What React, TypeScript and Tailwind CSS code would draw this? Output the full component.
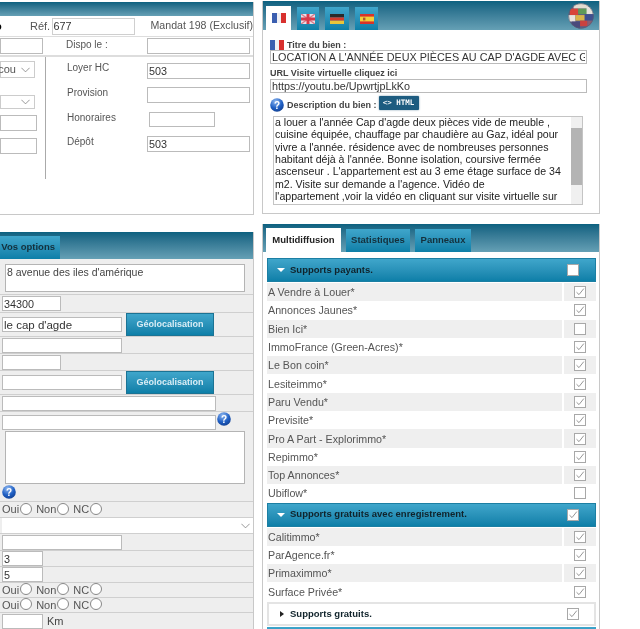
import type { ReactNode } from "react";

const headerBar = "bg-gradient-to-b from-[#0b6180] to-[#65a0b5]";
const blueGrad = "bg-gradient-to-b from-[#3fa6cb] to-[#0c7fa8]";

const Field = ({ value = "", className = "" }: { value?: string; className?: string }) => (
  <input
    readOnly
    value={value}
    className={`block border border-[#bbbbbb] bg-white px-[1px] text-[10.8px] leading-none text-[#333] outline-none ${className}`}
  />
);

const Help = ({ className = "" }: { className?: string }) => (
  <svg viewBox="0 0 14 14" className={`h-[14px] w-[14px] shrink-0 ${className}`}>
    <defs>
      <radialGradient id="helpGrad" cx="40%" cy="25%" r="80%">
        <stop offset="0%" stopColor="#8fb8f0" />
        <stop offset="60%" stopColor="#1f5fc4" />
        <stop offset="100%" stopColor="#123f90" />
      </radialGradient>
    </defs>
    <circle cx="7" cy="7" r="6.8" fill="url(#helpGrad)" />
    <text x="7" y="11" textAnchor="middle" fontSize="10" fontWeight="700" fill="#fff" fontFamily="Liberation Sans, sans-serif">
      ?
    </text>
  </svg>
);

const Check = ({ checked, className = "" }: { checked: boolean; className?: string }) => (
  <span className={`flex h-[12px] w-[12px] items-center justify-center border border-[#a8a8a8] bg-white ${className}`}>
    {checked && (
      <svg viewBox="0 0 10 10" className="h-[10px] w-[10px]">
        <path d="M1.5 5.2 L4 7.6 L8.8 1.6" fill="none" stroke="#8a8a8a" strokeWidth="0.9" />
      </svg>
    )}
  </span>
);

const Chevron = () => (
  <svg viewBox="0 0 12 7" className="h-[6px] w-[9px] shrink-0">
    <path d="M0.5 0.5 L6 6 L11.5 0.5" fill="none" stroke="#777" strokeWidth="1" />
  </svg>
);

const Radios = () => (
  <div className="flex items-center text-[11px] leading-none text-[#555]">
    {["Oui", "Non", "NC"].map((label) => (
      <span key={label} className="mr-[4px] flex items-center">
        {label}
        <span className="-mt-[2px] ml-[1px] h-[12px] w-[12px] rounded-full border border-[#888] bg-white" />
      </span>
    ))}
  </div>
);

const LangFlag = ({ lang }: { lang: "fr" | "uk" | "de" | "es" }) => (
  <svg viewBox="0 0 14 10" className="h-[10px] w-[14px]">
    {lang === "fr" && (
      <>
        <rect width="5" height="10" fill="#3b5fb0" />
        <rect x="5" width="4" height="10" fill="#f0f0f4" />
        <rect x="9" width="5" height="10" fill="#d8302e" />
      </>
    )}
    {lang === "uk" && (
      <>
        <rect width="14" height="10" fill="#e9dfe6" />
        <path d="M0 0 L14 10 M14 0 L0 10" stroke="#d97a8a" strokeWidth="1.4" />
        <rect x="5.5" width="3" height="10" fill="#d63a4a" />
        <rect y="3.5" width="14" height="3" fill="#d63a4a" />
      </>
    )}
    {lang === "de" && (
      <>
        <rect width="14" height="3.4" fill="#2a2a2a" />
        <rect y="3.4" width="14" height="3.3" fill="#d23a2c" />
        <rect y="6.7" width="14" height="3.3" fill="#e8c53a" />
      </>
    )}
    {lang === "es" && (
      <>
        <rect width="14" height="10" fill="#d8332a" />
        <rect y="2.6" width="14" height="4.8" fill="#f2cf3a" />
        <rect x="3" y="3.6" width="2.4" height="2.8" fill="#b5562c" />
      </>
    )}
  </svg>
);

const Globe = () => (
  <svg viewBox="0 0 28 28" className="h-[26px] w-[26px]">
    <defs>
      <clipPath id="globeClip">
        <circle cx="14" cy="14" r="13.5" />
      </clipPath>
    </defs>
    <g clipPath="url(#globeClip)">
      <rect width="28" height="28" fill="#5b5f86" />
      <rect x="6" y="0" width="16" height="6" fill="#e4dcd0" />
      <rect x="2" y="6" width="9" height="7" fill="#d8453a" />
      <rect x="11" y="6" width="12" height="6" fill="#5f9a58" />
      <rect x="20" y="4" width="8" height="8" fill="#e6e2da" />
      <rect x="0" y="13" width="8" height="7" fill="#e9e4de" />
      <rect x="8" y="13" width="10" height="6" fill="#d9b54a" />
      <rect x="18" y="12" width="10" height="7" fill="#3f4f8f" />
      <rect x="4" y="20" width="9" height="8" fill="#4a4a7c" />
      <rect x="13" y="19" width="8" height="6" fill="#c9423f" />
      <rect x="21" y="19" width="7" height="6" fill="#8a5d72" />
    </g>
    <circle cx="14" cy="14" r="13.3" fill="none" stroke="#56606e" strokeWidth="0.6" />
  </svg>
);

const Row = ({ h, className = "", children }: { h: string; className?: string; children?: ReactNode }) => (
  <div className={`flex shrink-0 items-center border-b border-[#cfcfcf] pl-[2px] ${h} ${className}`}>{children}</div>
);

const GeoButton = () => (
  <button className={`ml-[4px] h-[23px] w-[88px] border border-[#1b7394] text-center text-[9px] font-bold text-[#d9edf5] ${blueGrad}`}>
    Géolocalisation
  </button>
);

const TopLeft = () => (
  <section className="mt-[2px] h-[213px] overflow-hidden border-r border-b border-[#c8c8c8] text-[11px] text-[#555]">
    <div className={`h-[14px] ${headerBar}`} />
    <div className="flex h-[21px] items-center border-b border-[#ddd]">
      <span className="-ml-[5px] w-[5px] text-[11px] font-bold text-black">o</span>
      <span className="ml-[30px] w-[22px]">Réf.</span>
      <Field value="677" className="h-[17px] w-[83px] border-[#cfcfcf]" />
      <span className="ml-[16px] whitespace-nowrap text-[10.6px]">Mandat 198 (Exclusif)</span>
    </div>
    <div className="flex h-[20px] items-center border-b-2 border-[#ddd]">
      <Field className="h-[16px] w-[43px]" />
      <span className="ml-[23px] -mt-[4px] w-[81px] text-[10px]">Dispo le :</span>
      <Field className="h-[16px] w-[103px]" />
    </div>
    <div className="flex">
      <div className="h-[122px] w-[46px] border-r border-[#aaa]">
        <div className="mt-[4px] flex h-[17px] w-[35px] items-center justify-end gap-[5px] border border-[#ccc] bg-white pr-[4px]">
          <span>cou</span>
          <Chevron />
        </div>
        <div className="mt-[17px] flex h-[14px] w-[35px] items-center justify-end border border-[#ccc] bg-white pr-[4px]">
          <Chevron />
        </div>
        <Field className="mt-[6px] h-[16px] w-[37px]" />
        <Field className="mt-[7px] h-[16px] w-[37px]" />
      </div>
      <div className="flex flex-col pl-[21px] pt-[6px] text-[10px]">
        <div className="flex h-[24px] items-start">
          <span className="-mt-[3px] w-[80px]">Loyer HC</span>
          <Field value="503" className="h-[16px] w-[103px]" />
        </div>
        <div className="flex h-[25px] items-start">
          <span className="-mt-[2px] w-[80px]">Provision</span>
          <Field className="h-[16px] w-[103px]" />
        </div>
        <div className="flex h-[24px] items-start">
          <span className="-mt-[2px] w-[82px]">Honoraires</span>
          <Field className="h-[15px] w-[66px]" />
        </div>
        <div className="flex items-start">
          <span className="-mt-[2px] w-[80px]">Dépôt</span>
          <Field value="503" className="h-[16px] w-[103px]" />
        </div>
      </div>
    </div>
  </section>
);

const BottomLeft = () => (
  <section className="mt-[17px] h-[397px] overflow-hidden border-r border-[#c8c8c8] text-[11px] text-[#444]">
    <div className={`flex h-[27px] items-end ${headerBar}`}>
      <div className={`flex h-[23px] w-[60px] items-center justify-end pr-[5px] text-[9.5px] font-bold whitespace-nowrap text-[#14303c] ${blueGrad}`}>
        Vos options
      </div>
    </div>
    <div className="flex flex-col bg-[#eeeeee]">
      <Row h="h-[36px]" className="items-start pl-[5px] pt-[5px]">
        <div className="h-[28px] w-[240px] border border-[#b4b4b4] bg-white px-[1px] text-[10.5px] leading-[14px]">8 avenue des iles d'amérique</div>
      </Row>
      <Row h="h-[18px]"><Field value="34300" className="h-[15px] w-[59px]" /></Row>
      <Row h="h-[24px]"><Field value="le cap d'agde" className="h-[15px] w-[120px] text-[11.5px]" /><GeoButton /></Row>
      <Row h="h-[17px]"><Field className="h-[15px] w-[120px]" /></Row>
      <Row h="h-[17px]"><Field className="h-[15px] w-[59px]" /></Row>
      <Row h="h-[24px]"><Field className="h-[15px] w-[120px]" /><GeoButton /></Row>
      <Row h="h-[17px]"><Field className="h-[15px] w-[214px]" /></Row>
      <div className="flex shrink-0 flex-col border-b border-[#cfcfcf]">
        <div className="flex h-[19px] items-start pl-[2px] pt-[3px]">
          <Field className="h-[15px] w-[214px]" />
          <Help className="ml-[1px] -mt-[3px]" />
        </div>
        <div className="ml-[5px] h-[53px] w-[240px] border border-[#b4b4b4] bg-white" />
        <Help className="ml-[2px] mt-[1px] mb-[2px]" />
      </div>
      <Row h="h-[16px]"><Radios /></Row>
      <Row h="h-[16px]">
        <div className="flex h-[15px] w-full items-center justify-end bg-white pr-[3px]"><Chevron /></div>
      </Row>
      <Row h="h-[17px]"><Field className="h-[15px] w-[120px]" /></Row>
      <Row h="h-[16px]"><Field value="3" className="h-[15px] w-[41px]" /></Row>
      <Row h="h-[16px]"><Field value="5" className="h-[15px] w-[41px]" /></Row>
      <Row h="h-[15px]"><Radios /></Row>
      <Row h="h-[15px]"><Radios /></Row>
      <Row h="h-[17px]">
        <Field className="h-[15px] w-[41px]" />
        <span className="ml-[4px]">Km</span>
      </Row>
    </div>
  </section>
);

const description = [
  "a louer a l'année Cap d'agde deux pièces vide de meuble ,",
  "cuisine équipée, chauffage par chaudière au Gaz, idéal pour",
  "vivre a l'année. résidence avec de nombreuses personnes",
  "habitant déjà à l'année. Bonne isolation, coursive fermée",
  "ascenseur . L'appartement est au 3 eme étage surface de 34",
  "m2. Visite sur demande a l'agence. Vidéo de",
  "l'appartement ,voir la vidéo en cliquant sur visite virtuelle sur",
];

const TopRight = () => (
  <section className="mt-[1px] h-[213px] overflow-hidden border-x border-b border-[#c8c8c8]">
    <div className={`flex h-[29px] items-end pl-[3px] ${headerBar}`}>
      <div className="flex h-[24px] w-[25px] items-center justify-center bg-white"><LangFlag lang="fr" /></div>
      <div className={`ml-[6px] flex h-[23px] w-[22px] items-center justify-center ${blueGrad}`}><LangFlag lang="uk" /></div>
      <div className={`ml-[6px] flex h-[23px] w-[24px] items-center justify-center ${blueGrad}`}><LangFlag lang="de" /></div>
      <div className={`ml-[6px] flex h-[23px] w-[23px] items-center justify-center ${blueGrad}`}><LangFlag lang="es" /></div>
      <div className="mb-[1px] ml-auto mr-[5px]"><Globe /></div>
    </div>
    <div className="pl-[7px] text-[9px] font-bold text-[#444]">
      <div className="flex h-[20px] items-end gap-[3px] leading-[11px]">
        <LangFlag lang="fr" />
        <span className="-mb-[1px]">Titre du bien :</span>
      </div>
      <Field
        value="LOCATION A L'ANNÉE DEUX PIÈCES AU CAP D'AGDE AVEC GARAGE"
        className="h-[14px] w-[317px] text-[10.6px] font-normal"
      />
      <div className="mt-[4px] h-[11px] leading-[11px]">URL Visite virtuelle cliquez ici</div>
      <Field value="https://youtu.be/UpwrtjpLkKo" className="h-[14px] w-[317px] text-[10.6px] font-normal" />
      <div className="mt-[3px] flex h-[16px] items-end">
        <Help />
        <span className="ml-[3px]">Description du bien :</span>
        <span className="mb-[2px] ml-[2px] flex h-[14px] w-[40px] items-center justify-center rounded-[1px] bg-[#1d5c80] font-['DejaVu_Sans_Mono',monospace] text-[7.5px] font-bold whitespace-nowrap text-white shadow-[0_0_2px_#6a8ea2]">
          {"<> HTML"}
        </span>
      </div>
      <div className="ml-[3px] mt-[4px] flex h-[89px] w-[310px] border border-[#c4c4c4] bg-white font-normal">
        <div className="-mt-[1px] flex-1 overflow-hidden whitespace-nowrap pl-[1px] text-[10.6px] leading-[12.35px] text-[#222]">
          {description.map((line) => (
            <div key={line}>{line}</div>
          ))}
        </div>
        <div className="flex w-[11px] flex-col bg-[#f0f0f0]">
          <div className="h-[11px]" />
          <div className="h-[57px] bg-[#b4b4b4]" />
        </div>
      </div>
    </div>
  </section>
);

type Support = { name: string; on: boolean };

const paid: Support[] = [
  { name: "A Vendre à Louer*", on: true },
  { name: "Annonces Jaunes*", on: true },
  { name: "Bien Ici*", on: false },
  { name: "ImmoFrance (Green-Acres)*", on: true },
  { name: "Le Bon coin*", on: true },
  { name: "Lesiteimmo*", on: true },
  { name: "Paru Vendu*", on: true },
  { name: "Previsite*", on: true },
  { name: "Pro A Part - Explorimmo*", on: true },
  { name: "Repimmo*", on: true },
  { name: "Top Annonces*", on: true },
  { name: "Ubiflow*", on: false },
];

const free: Support[] = [
  { name: "Calitimmo*", on: true },
  { name: "ParAgence.fr*", on: true },
  { name: "Primaximmo*", on: true },
  { name: "Surface Privée*", on: true },
];

const Triangle = ({ open }: { open: boolean }) =>
  open ? (
    <span className="h-0 w-0 border-x-[4px] border-t-[4px] border-x-transparent border-t-white" />
  ) : (
    <span className="ml-[3px] h-0 w-0 border-y-[3px] border-l-[4px] border-y-transparent border-l-[#222]" />
  );

const AccordionHead = ({ title, on }: { title: string; on: boolean }) => (
  <div className={`flex h-[24px] items-center border border-[#1c7fa3] pl-[9px] ${blueGrad}`}>
    <Triangle open />
    <span className="ml-[5px] flex-1 text-[9.5px] font-bold text-[#10232b]">{title}</span>
    <Check checked={on} className="mr-[16px]" />
  </div>
);

const Rows = ({ items }: { items: Support[] }) => (
  <div className="mt-[1px]">
    {items.map((item, i) => (
      <div key={item.name} className={`flex h-[18.3px] items-center text-[10.7px] text-[#555] ${i % 2 === 0 ? "bg-[#efefef]" : "bg-white"}`}>
        <span className="flex-1 pl-[1px]">{item.name}</span>
        <span className="flex h-full w-[34px] items-center justify-center border-l-2 border-white">
          <Check checked={item.on} />
        </span>
      </div>
    ))}
  </div>
);

const BottomRight = () => (
  <section className="mt-[10px] h-[405px] overflow-hidden border-x border-[#c8c8c8]">
    <div className={`flex h-[28px] items-end pl-[3px] text-[9.5px] font-bold text-[#14303c] ${headerBar}`}>
      <div className="flex h-[24px] w-[75px] items-center justify-center bg-white text-[#222]">Multidiffusion</div>
      <div className={`ml-[5px] flex h-[23px] w-[64px] items-center justify-center ${blueGrad}`}>Statistiques</div>
      <div className={`ml-[5px] flex h-[23px] w-[56px] items-center justify-center ${blueGrad}`}>Panneaux</div>
    </div>
    <div className="ml-[4px] mt-[6px] w-[329px]">
      <AccordionHead title="Supports payants." on={false} />
      <Rows items={paid} />
      <AccordionHead title="Supports gratuits avec enregistrement." on />
      <Rows items={free} />
      <div className="mt-[1px] flex h-[24px] items-center border-2 border-[#e4e4e4] pl-[8px]">
        <Triangle open={false} />
        <span className="ml-[6px] flex-1 text-[9.5px] font-bold text-[#10232b]">Supports gratuits.</span>
        <Check checked className="mr-[15px]" />
      </div>
      <div className={`mt-[1px] h-[10px] ${blueGrad}`} />
    </div>
  </section>
);

export default function App() {
  return (
    <div className="flex h-[629px] w-[640px] overflow-hidden bg-white font-['Liberation_Sans',Arial,sans-serif] blur-[0.35px]">
      <div className="w-[254px] shrink-0">
        <TopLeft />
        <BottomLeft />
      </div>
      <div className="ml-[8px] w-[338px] shrink-0">
        <TopRight />
        <BottomRight />
      </div>
    </div>
  );
}
